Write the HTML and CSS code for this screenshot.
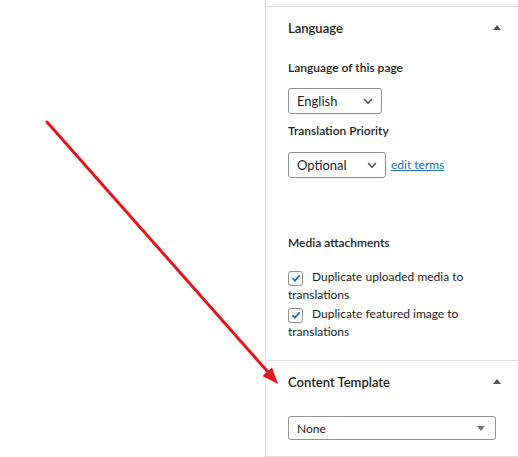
FILE: index.html
```html
<!DOCTYPE html>
<html>
<head>
  <link rel="stylesheet" href="styles.css">
</head>
<body>
  <div class="screen">
    <div class="canvas"></div>

    <aside class="sidebar">
      <div class="sidebar-top"></div>

      <section class="panel">
        <div class="panel-header">
          <h2>Language</h2>
          <span class="toggle"></span>
        </div>
        <div class="panel-body">
          <label class="field-label">Language of this page</label>
          <div class="select select-lang">
            <span>English</span>
            <svg class="chevron" width="12" height="8" viewBox="0 0 12 8"><path d="M2 2l4 4 4-4" fill="none" stroke="#50575e" stroke-width="1.6"/></svg>
          </div>

          <label class="field-label priority-label">Translation Priority</label>
          <div class="row">
            <div class="select select-priority">
              <span>Optional</span>
              <svg class="chevron" width="12" height="8" viewBox="0 0 12 8"><path d="M2 2l4 4 4-4" fill="none" stroke="#50575e" stroke-width="1.6"/></svg>
            </div>
            <a class="link" href="#">edit terms</a>
          </div>

          <label class="field-label media-label">Media attachments</label>
          <div class="check">
            <span class="box"><svg width="12" height="12" viewBox="0 0 12 12"><path d="M2.5 6.2l2.4 2.4 4.8-5.2" fill="none" stroke="#2271b1" stroke-width="1.8"/></svg></span>
            <span class="check-text">Duplicate uploaded media to translations</span>
          </div>
          <div class="check">
            <span class="box"><svg width="12" height="12" viewBox="0 0 12 12"><path d="M2.5 6.2l2.4 2.4 4.8-5.2" fill="none" stroke="#2271b1" stroke-width="1.8"/></svg></span>
            <span class="check-text">Duplicate featured image to translations</span>
          </div>
        </div>
      </section>

      <section class="panel panel-template">
        <div class="panel-header">
          <h2>Content Template</h2>
          <span class="toggle"></span>
        </div>
        <div class="panel-body template-body">
          <div class="select select-wide">
            <span>None</span>
            <span class="caret"></span>
          </div>
        </div>
      </section>
    </aside>

    <!-- red pointer drawn over the page -->
    <svg class="pointer" width="518" height="457" viewBox="0 0 518 457">
      <line x1="47" y1="122" x2="268" y2="372" stroke="#e8141b" stroke-width="3" stroke-linecap="round"/>
      <polygon points="278,384 262.5,376 272,367.5" fill="#e8141b"/>
    </svg>
  </div>
</body>
</html>
```

FILE: styles.css
```css
body {
  margin: 0;
  background: #fff;
  font-family: Lato, "Noto Sans", sans-serif;
  color: #1e1e1e;
  overflow: hidden;
}

.screen {
  position: relative;
  display: flex;
  width: 518px;
  height: 457px;
}

.canvas {
  width: 265px;
  flex-shrink: 0;
}

.sidebar {
  flex: 1;
  border-left: 1px solid #e0e0e0;
  display: flex;
  flex-direction: column;
}

.sidebar-top {
  height: 6px;
}

.panel {
  border-top: 1px solid #e0e0e0;
}

.panel-header {
  height: 41px;
  display: flex;
  align-items: center;
  justify-content: space-between;
  padding: 0 17px 0 22px;
}

.panel-header h2 {
  margin: 0;
  font-size: 13px;
  font-weight: 600;
  line-height: 20px;
}

.toggle {
  width: 0;
  height: 0;
  border-left: 4px solid transparent;
  border-right: 4px solid transparent;
  border-bottom: 5px solid #555;
}

.panel-body {
  padding: 11px 22px 0 22px;
  height: 312px;
  box-sizing: border-box;
}

.field-label {
  display: block;
  font-size: 12px;
  font-weight: 600;
  line-height: 18px;
}

.select {
  display: flex;
  align-items: center;
  justify-content: space-between;
  box-sizing: border-box;
  height: 26px;
  border: 1px solid #8c8f94;
  border-radius: 3px;
  padding: 0 7px 0 8px;
  font-size: 13px;
}

.select-lang {
  width: 94px;
  margin-top: 11px;
}

.priority-label {
  margin-top: 8px;
}

.row {
  display: flex;
  align-items: center;
  margin-top: 12px;
}

.select-priority {
  width: 98px;
}

.link {
  margin-left: 5px;
  margin-top: -2px;
  font-size: 12px;
  color: #2271b1;
}

.media-label {
  margin-top: 56px;
}

.check {
  margin-top: 16px;
  font-size: 12px;
  line-height: 18px;
}

.check + .check {
  margin-top: 1px;
}

.box {
  display: inline-flex;
  align-items: center;
  justify-content: center;
  vertical-align: -3px;
  width: 15px;
  height: 15px;
  box-sizing: border-box;
  border: 1px solid #8c8f94;
  border-radius: 3px;
  margin-right: 6px;
}

.template-body {
  padding: 14px 22px 0 22px;
  height: auto;
}

.panel-template {
  border-bottom: 1px solid #e0e0e0;
  padding-bottom: 16px;
}

.select-wide {
  width: 208px;
  height: 24px;
  font-size: 12px;
  border-color: #949494;
  padding: 0 10px 0 8px;
}

.caret {
  width: 0;
  height: 0;
  border-left: 4px solid transparent;
  border-right: 4px solid transparent;
  border-top: 5px solid #757575;
}

.pointer {
  position: absolute;
  left: 0;
  top: 0;
  pointer-events: none;
}
```
